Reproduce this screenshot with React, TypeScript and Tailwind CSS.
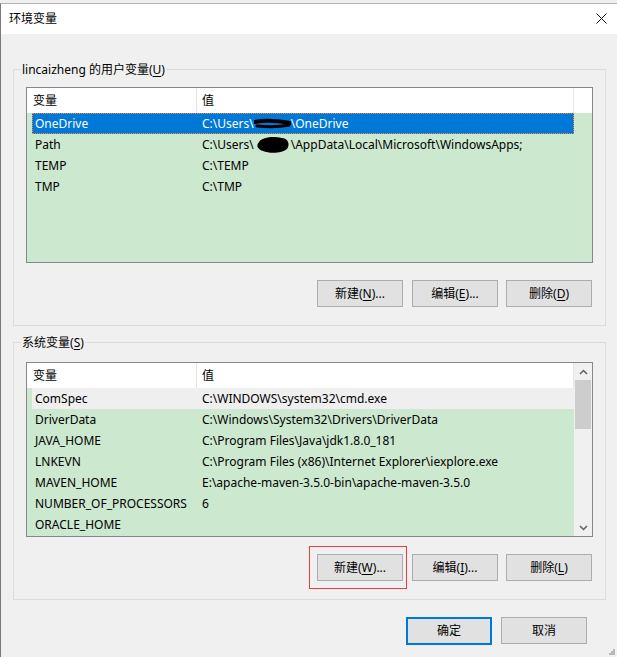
import React from 'react';

type Row = { name: string; value: React.ReactNode; state?: 'selected' | 'hover' };

// scribbles that hide the user name in the paths
const BlotLine = () => (
  <svg width="37" height="14" viewBox="0 0 37 14" className="inline-block align-middle -mt-[2px]">
    <path d="M1 5 C10 3 24 4 36 6" stroke="#000" strokeWidth="4" fill="none" strokeLinecap="round" />
    <path d="M3 9 C13 10 26 10 35 8" stroke="#000" strokeWidth="3" fill="none" strokeLinecap="round" />
  </svg>
);

const BlotBlob = () => (
  <svg width="37" height="18" viewBox="0 0 37 18" className="inline-block align-middle -mt-[1px]">
    <path d="M5 6 C8 1 20 0 28 2 C35 3 36 9 33 13 C29 17 16 18 9 15 C3 13 2 9 5 6 Z" fill="#000" />
  </svg>
);

const userVars: Row[] = [
  { name: 'OneDrive', value: <>{'C:\\Users\\'}<BlotLine />{'\\OneDrive'}</>, state: 'selected' },
  { name: 'Path', value: <>{'C:\\Users\\'}<BlotBlob />{'\\AppData\\Local\\Microsoft\\WindowsApps;'}</> },
  { name: 'TEMP', value: 'C:\\TEMP' },
  { name: 'TMP', value: 'C:\\TMP' },
];

const sysVars: Row[] = [
  { name: 'ComSpec', value: 'C:\\WINDOWS\\system32\\cmd.exe', state: 'hover' },
  { name: 'DriverData', value: 'C:\\Windows\\System32\\Drivers\\DriverData' },
  { name: 'JAVA_HOME', value: 'C:\\Program Files\\Java\\jdk1.8.0_181' },
  { name: 'LNKEVN', value: 'C:\\Program Files (x86)\\Internet Explorer\\iexplore.exe' },
  { name: 'MAVEN_HOME', value: 'E:\\apache-maven-3.5.0-bin\\apache-maven-3.5.0' },
  { name: 'NUMBER_OF_PROCESSORS', value: '6' },
  { name: 'ORACLE_HOME', value: '' },
];

const Key = ({ k }: { k: string }) => (
  <>(<span className="underline underline-offset-[2px] decoration-[1px]">{k}</span>)</>
);

const Btn = ({ children, primary }: { children: React.ReactNode; primary?: boolean }) => (
  <div
    className={`flex w-[86px] items-center justify-center bg-[#e1e1e1] leading-[16px] ${
      primary ? 'h-[28px] border-2 border-[#0078d7]' : 'h-[27px] border border-[#adadad]'
    }`}
  >
    {children}
  </div>
);

const Chevron = ({ up }: { up?: boolean }) => (
  <svg width="9" height="6" viewBox="0 0 9 6">
    <path d={up ? 'M1 5 L4.5 1.5 L8 5' : 'M1 1 L4.5 4.5 L8 1'} stroke="#606060" strokeWidth="1.5" fill="none" />
  </svg>
);

const ListView = ({ rows, scroll, height }: { rows: Row[]; scroll?: boolean; height: string }) => (
  <div className={`flex overflow-hidden border border-[#828790] bg-[#cce8cf] ${height}`}>
    <div className="flex min-w-0 flex-1 flex-col">
      <div className="flex h-[25px] shrink-0 bg-white leading-[25px]">
        <div className="w-[170px] shrink-0 border-r border-[#e5e5e5] pl-[6px]">变量</div>
        <div className="w-[377px] shrink-0 border-r border-[#e5e5e5] pl-[5px]">值</div>
        <div className="flex-1" />
      </div>
      {rows.map((r) => (
        <div key={r.name} className="flex h-[21px] shrink-0 pl-[5px]">
          <div
            className={`flex w-[542px] shrink-0 border leading-[19px] whitespace-nowrap ${
              r.state === 'selected'
                ? 'border-dotted border-[#ff8728] bg-[#0078d7] text-white'
                : r.state === 'hover'
                  ? 'border-transparent bg-[#efefef]'
                  : 'border-transparent'
            }`}
          >
            <div className="w-[164px] shrink-0 overflow-hidden pl-[2px]">{r.name}</div>
            <div className="flex-1 overflow-hidden pl-[5px]">{r.value}</div>
          </div>
        </div>
      ))}
    </div>
    {scroll && (
      <div className="flex w-[18px] shrink-0 flex-col bg-[#f0f0f0]">
        <div className="flex h-[17px] items-center justify-center">
          <Chevron up />
        </div>
        <div className="mx-[1px] h-[49px] bg-[#cdcdcd]" />
        <div className="flex-1" />
        <div className="flex h-[17px] items-center justify-center">
          <Chevron />
        </div>
      </div>
    )}
  </div>
);

const Group = ({ label, className, children }: { label: React.ReactNode; className: string; children: React.ReactNode }) => (
  <div className={`relative w-[593px] border border-[#dcdcdc] px-[12px] ${className}`}>
    <span className="absolute -top-[8px] left-[7px] bg-[#f0f0f0] px-[1px] leading-[16px]">{label}</span>
    {children}
  </div>
);

export default function App() {
  return (
    <div className="relative h-[657px] w-[617px] overflow-hidden bg-[#f0f0f0] pt-[3px] text-[12px] text-black font-['Noto_Sans','Noto_Sans_CJK_SC',sans-serif]">
      <div className="h-full border-t border-l border-t-[#b4b4b4] border-l-[#7a7a7a]">
        {/* title bar */}
        <div className="flex h-[30px] items-center justify-between bg-white pl-[8px] pr-[10px]">
          <span className="leading-[16px]">环境变量</span>
          <svg width="11" height="11" viewBox="0 0 11 11" className="-mt-[2px]">
            <path d="M0.5 0.5 L10.5 10.5 M10.5 0.5 L0.5 10.5" stroke="#111" strokeWidth="1" />
          </svg>
        </div>

        <div className="pl-[12px] pt-[35px]">
          <Group
            className="pt-[17px] pb-[18px]"
            label={
              <>
                lincaizheng 的用户变量<Key k="U" />
              </>
            }
          >
            <ListView rows={userVars} height="h-[176px]" />
            <div className="mt-[17px] flex justify-end pr-[1px]">
              <Btn>
                新建<Key k="N" />...
              </Btn>
              <div className="ml-[9px]">
                <Btn>
                  编辑<Key k="E" />...
                </Btn>
              </div>
              <div className="ml-[8px]">
                <Btn>
                  删除<Key k="D" />
                </Btn>
              </div>
            </div>
          </Group>

          <Group
            className="mt-[16px] pt-[19px] pb-[18px]"
            label={
              <>
                系统变量<Key k="S" />
              </>
            }
          >
            <ListView rows={sysVars} scroll height="h-[175px]" />
            <div className="mt-[17px] flex justify-end pr-[1px]">
              <div className="relative">
                <Btn>
                  新建<Key k="W" />...
                </Btn>
                <span className="pointer-events-none absolute -top-[8px] -bottom-[8px] -left-[8px] -right-[4px] border border-[#ee3b3b]" />
              </div>
              <div className="ml-[9px]">
                <Btn>
                  编辑<Key k="I" />...
                </Btn>
              </div>
              <div className="ml-[8px]">
                <Btn>
                  删除<Key k="L" />
                </Btn>
              </div>
            </div>
          </Group>
        </div>

        <div className="mt-[17px] flex justify-end gap-[9px] pr-[30px]">
          <Btn primary>确定</Btn>
          <Btn>取消</Btn>
        </div>
      </div>

      {/* size grip */}
      <svg width="6" height="6" viewBox="0 0 6 6" className="absolute right-[2px] bottom-[2px]">
        <rect x="4" y="0" width="2" height="2" fill="#b8b8b8" />
        <rect x="2" y="2" width="2" height="2" fill="#b8b8b8" />
        <rect x="4" y="2" width="2" height="2" fill="#b8b8b8" />
        <rect x="0" y="4" width="2" height="2" fill="#b8b8b8" />
        <rect x="2" y="4" width="2" height="2" fill="#b8b8b8" />
        <rect x="4" y="4" width="2" height="2" fill="#b8b8b8" />
      </svg>
    </div>
  );
}
